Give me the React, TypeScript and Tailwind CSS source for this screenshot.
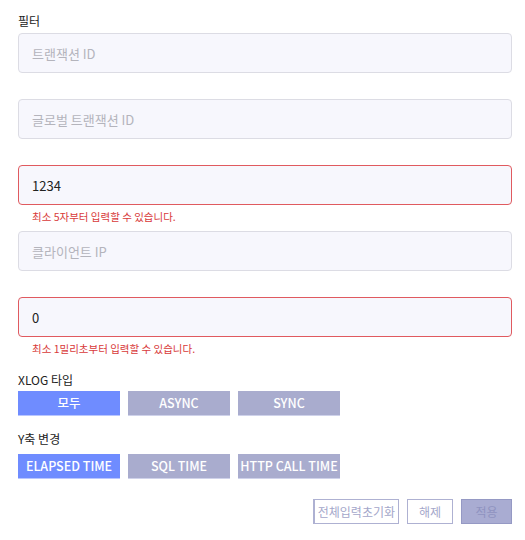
const font = { fontFamily: '"Noto Sans CJK KR", "Noto Sans", sans-serif' };

type Field = { placeholder: string; value?: string; error?: string };

const fields: Field[] = [
  { placeholder: "트랜잭션 ID" },
  { placeholder: "글로벌 트랜잭션 ID" },
  { placeholder: "", value: "1234", error: "최소 5자부터 입력할 수 있습니다." },
  { placeholder: "클라이언트 IP" },
  { placeholder: "", value: "0", error: "최소 1밀리초부터 입력할 수 있습니다." },
];

function FilterInput({ field }: { field: Field }) {
  const invalid = !!field.error;
  return (
    <div className="h-[66px]">
      <input
        defaultValue={field.value}
        placeholder={field.placeholder}
        className={
          invalid
            ? "h-10 w-full rounded border border-[#e05a5f] bg-[#f7f7fd] px-[13px] text-[13px] text-[#222] outline-none"
            : "h-10 w-full rounded border border-[#dcdce4] bg-[#f7f7fd] px-[13px] text-[13px] text-[#222] outline-none placeholder:text-[#b4b4bc]"
        }
        style={font}
      />
      {invalid && (
        <p className="mt-[5px] pl-[14px] text-[10.5px] leading-[14px] text-[#d83a3a]">{field.error}</p>
      )}
    </div>
  );
}

function Toggle({ items, active }: { items: string[]; active: number }) {
  return (
    <div className="flex gap-2">
      {items.map((label, i) => (
        <button
          key={label}
          className={
            i === active
              ? "h-[25px] w-[102px] border-b border-[#b9c6ff] bg-[#6f8cff] text-[12.5px] font-medium text-white"
              : "h-[25px] w-[102px] border-b border-[#cfd2ea] bg-[#a9acce] text-[12.5px] font-medium text-white"
          }
        >
          {label}
        </button>
      ))}
    </div>
  );
}

export default function App() {
  return (
    <div className="w-[525px] bg-white pl-[18px] pr-[13px] pt-[12px] text-[#222]" style={font}>
      <p className="mb-[4px] text-[12px] leading-[17px]">필터</p>

      {fields.map((f, i) => (
        <FilterInput key={i} field={f} />
      ))}

      <p className="mt-[8px] text-[12px] leading-[17px]">XLOG 타입</p>
      <div className="mt-[3px]">
        <Toggle items={["모두", "ASYNC", "SYNC"]} active={0} />
      </div>

      <p className="mt-[14px] text-[12px] leading-[17px]">Y축 변경</p>
      <div className="mt-[7px]">
        <Toggle items={["ELAPSED TIME", "SQL TIME", "HTTP CALL TIME"]} active={0} />
      </div>

      <div className="mt-[20px] flex justify-end gap-2 pb-4">
        <button className="h-[25px] border border-l-2 border-[#aeb1d2] bg-white px-[3px] text-[12px] text-[#a4a7ca]">
          전체입력초기화
        </button>
        <button className="h-[25px] w-[46px] border border-[#aeb1d2] bg-white text-[12px] text-[#a4a7ca]">
          해제
        </button>
        <button className="h-[25px] w-[51px] border border-[#9599c4] bg-[#a9acd2] text-[12px] text-[#8f93c0]">
          적용
        </button>
      </div>
    </div>
  );
}
